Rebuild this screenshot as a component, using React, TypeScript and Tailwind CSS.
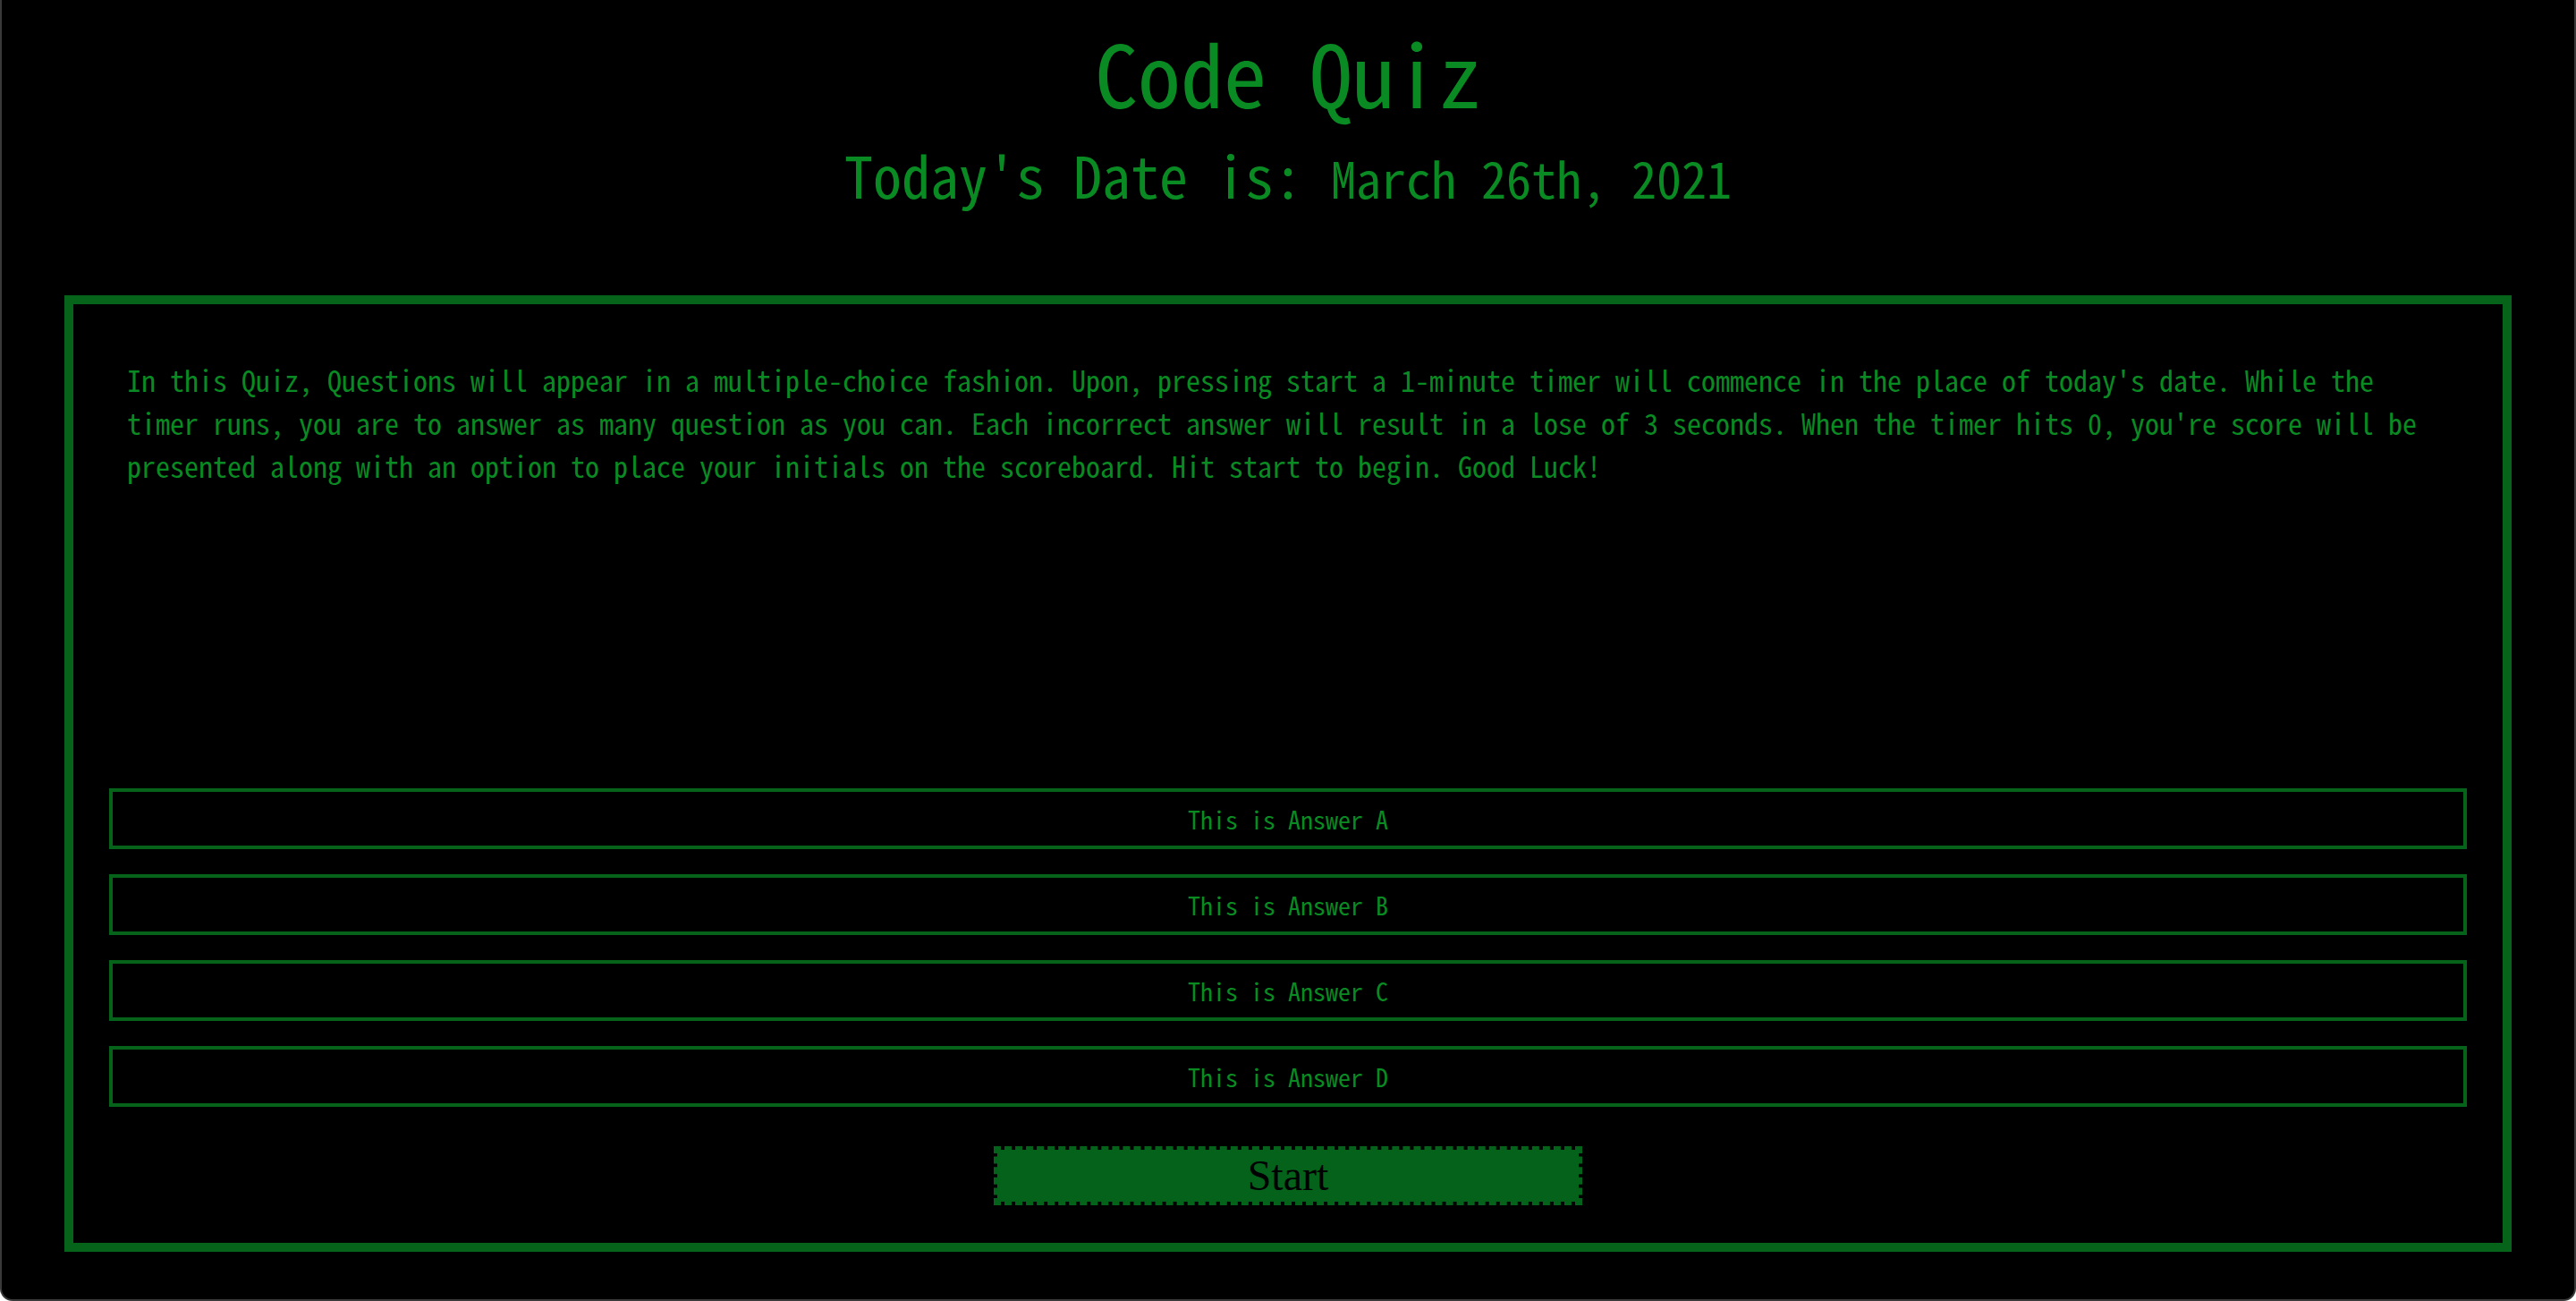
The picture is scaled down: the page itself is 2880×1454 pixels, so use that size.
import React from "react";

const mono = { fontFamily: '"Noto Sans Mono CJK JP", "DejaVu Sans Mono", monospace' };

const answers = ["This is Answer A", "This is Answer B", "This is Answer C", "This is Answer D"];

export default function App() {
  return (
    <div
      className="h-[1454px] bg-black border-x-2 border-b-2 border-[#3a3a3a] rounded-b-[14px] text-[#0a8a22] overflow-hidden"
      style={mono}
    >
      {/* Header */}
      <header className="text-center">
        <h1 className="text-[96px] leading-[96px] pt-[32px]">Code Quiz</h1>
        <h2 className="text-[64px] leading-[64px] mt-[34px]">
          Today's Date is: <span className="text-[56px]">March 26th, 2021</span>
        </h2>
      </header>

      {/* Quiz box */}
      <main className="mx-[70px] mt-[100px] border-[10px] border-[#05631a] pt-[60px] pb-[42px]">
        <p className="px-[60px] text-[32px] leading-[48px]">
          In this Quiz, Questions will appear in a multiple-choice fashion. Upon, pressing start a 1-minute timer will
          commence in the place of today's date. While the timer runs, you are to answer as many question as you can.
          Each incorrect answer will result in a lose of 3 seconds. When the timer hits 0, you're score will be
          presented along with an option to place your initials on the scoreboard. Hit start to begin. Good Luck!
        </p>

        <div className="mt-[337px] px-[40px] flex flex-col gap-[28px]">
          {answers.map((a) => (
            <button
              key={a}
              className="h-[68px] w-full border-4 border-[#05631a] bg-black text-[28px] text-[#0a8a22]"
              style={mono}
            >
              {a}
            </button>
          ))}
        </div>

        <div className="mt-[44px] flex justify-center">
          <button className="w-[658px] h-[66px] border-4 border-dashed border-[#04621a] bg-[#04621a] bg-clip-padding text-black text-[48px] leading-none font-['Liberation_Serif',serif]">
            Start
          </button>
        </div>
      </main>
    </div>
  );
}
